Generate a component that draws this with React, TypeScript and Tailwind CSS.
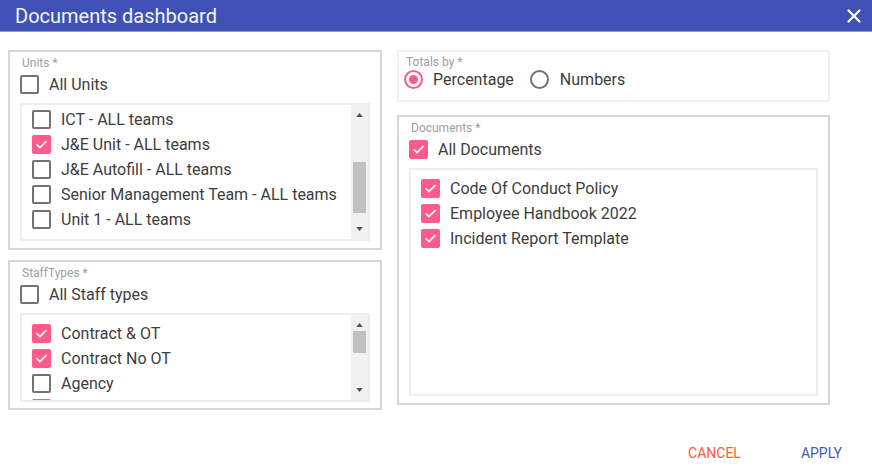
import { X } from 'lucide-react'

const PINK = 'bg-[#ff5a8c]'

function Box({ checked }: { checked?: boolean }) {
  if (checked) {
    return (
      <span className={`flex h-[19px] w-[19px] shrink-0 items-center justify-center rounded-[2px] ${PINK}`}>
        <svg viewBox="0 0 24 24" className="h-[15px] w-[15px]" fill="none" stroke="white" strokeWidth="2.6" strokeLinecap="square">
          <path d="M5 12.5l4.5 4.5L19 7.5" />
        </svg>
      </span>
    )
  }
  return <span className="h-[19px] w-[19px] shrink-0 rounded-[2px] border-2 border-[#737373] bg-white" />
}

function Row({ label, checked }: { label: string; checked?: boolean }) {
  return (
    <div className="flex h-[25px] items-center gap-[10px]">
      <Box checked={checked} />
      <span className="whitespace-nowrap text-[16px] text-[#3d3d3d]">{label}</span>
    </div>
  )
}

function Scrollbar({ thumbTop, thumbHeight }: { thumbTop: number; thumbHeight: number }) {
  return (
    <div className="relative flex w-[17px] shrink-0 flex-col items-center bg-[#f1f1f1]">
      <svg viewBox="0 0 8 5" className="mt-[8px] h-[4px] w-[7px]" fill="#505050">
        <path d="M0 5L4 0L8 5Z" />
      </svg>
      <div
        className="absolute left-[2px] right-[2px] bg-[#c1c1c1]"
        style={{ top: thumbTop, height: thumbHeight }}
      />
      <div className="flex-1" />
      <svg viewBox="0 0 8 5" className="mb-[8px] h-[4px] w-[7px]" fill="#505050">
        <path d="M0 0L4 5L8 0Z" />
      </svg>
    </div>
  )
}

export default function App() {
  const units = [
    { label: 'Admin - ALL teams' },
    { label: 'ICT - ALL teams' },
    { label: 'J&E Unit - ALL teams', checked: true },
    { label: 'J&E Autofill - ALL teams' },
    { label: 'Senior Management Team - ALL teams' },
    { label: 'Unit 1 - ALL teams' },
  ]
  const staff = [
    { label: 'Contract & OT', checked: true },
    { label: 'Contract No OT', checked: true },
    { label: 'Agency' },
    { label: 'Bank', checked: true },
  ]
  const docs = ['Code Of Conduct Policy', 'Employee Handbook 2022', 'Incident Report Template']

  return (
    <div className="flex h-[470px] w-[872px] flex-col bg-white font-['Roboto',sans-serif]">
      {/* Header */}
      <div className="flex h-[32px] shrink-0 items-center justify-between border-b border-[#8c9ad8] bg-[#3f51b5] pl-[15px] pr-[7px]">
        <h1 className="text-[20px] leading-none text-[#f2f3fb]">Documents dashboard</h1>
        <X size={22} strokeWidth={2.4} className="text-white" />
      </div>

      <div className="flex gap-[15px] pl-[8px] pt-[18px]">
        {/* Left column */}
        <div className="flex w-[374px] flex-col gap-[10px]">
          <div className="flex h-[200px] flex-col border-2 border-[#d6d6d6] px-[10px] pb-[7px]">
            <span className="mt-[4px] pl-[2px] text-[12px] leading-[14px] text-[#9e9e9e]">Units *</span>
            <div className="mt-[2px]">
              <Row label="All Units" />
            </div>
            <div className="mt-[6px] flex min-h-0 flex-1 border-2 border-[#eeeeee]">
              <div className="flex-1 overflow-hidden pl-[10px]">
                <div className="-mt-[23px]">
                  {units.map(u => (
                    <Row key={u.label} label={u.label} checked={u.checked} />
                  ))}
                </div>
              </div>
              <Scrollbar thumbTop={57} thumbHeight={51} />
            </div>
          </div>

          <div className="flex h-[150px] flex-col border-2 border-[#d6d6d6] px-[10px] pb-[6px]">
            <span className="mt-[4px] pl-[2px] text-[12px] leading-[14px] text-[#9e9e9e]">StaffTypes *</span>
            <div className="mt-[2px]">
              <Row label="All Staff types" />
            </div>
            <div className="mt-[6px] flex min-h-0 flex-1 border-2 border-[#eeeeee]">
              <div className="flex-1 overflow-hidden pl-[10px] pt-[6px]">
                {staff.map(s => (
                  <Row key={s.label} label={s.label} checked={s.checked} />
                ))}
              </div>
              <Scrollbar thumbTop={16} thumbHeight={22} />
            </div>
          </div>
        </div>

        {/* Right column */}
        <div className="flex w-[433px] flex-col gap-[13px]">
          <div className="flex h-[52px] flex-col border-2 border-[#f1f1f1] px-[5px]">
            <span className="mt-[3px] pl-[2px] text-[12px] leading-[14px] text-[#9e9e9e]">Totals by *</span>
            <div className="-mt-[2px] flex h-[25px] items-center">
              <span className="flex h-[19px] w-[19px] items-center justify-center rounded-full border-2 border-[#ff5a8c]">
                <span className={`h-[9px] w-[9px] rounded-full ${PINK}`} />
              </span>
              <span className="ml-[10px] text-[16px] text-[#3d3d3d]">Percentage</span>
              <span className="ml-[16px] h-[19px] w-[19px] rounded-full border-2 border-[#737373]" />
              <span className="ml-[11px] text-[16px] text-[#3d3d3d]">Numbers</span>
            </div>
          </div>

          <div className="flex h-[290px] flex-col border-2 border-[#d6d6d6] px-[10px] pb-[7px]">
            <span className="mt-[4px] pl-[2px] text-[12px] leading-[14px] text-[#9e9e9e]">Documents *</span>
            <div className="mt-[2px]">
              <Row label="All Documents" checked />
            </div>
            <div className="mt-[6px] flex-1 border-2 border-[#eeeeee] pl-[10px] pt-[6px]">
              {docs.map(d => (
                <Row key={d} label={d} checked />
              ))}
            </div>
          </div>
        </div>
      </div>

      {/* Footer */}
      <div className="mt-auto flex h-[38px] items-center justify-end gap-[60px] pt-[4px] pr-[30px]">
        <button className="text-[14px] uppercase text-[#ff5a36]">Cancel</button>
        <button className="text-[14px] uppercase text-[#4758c0]">Apply</button>
      </div>
    </div>
  )
}
